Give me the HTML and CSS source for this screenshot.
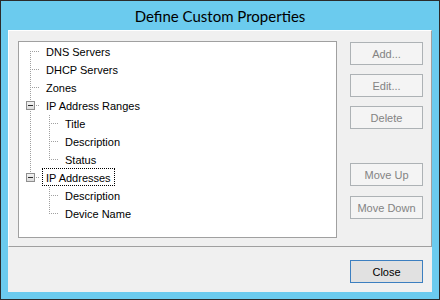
FILE: index.html
```html
<!DOCTYPE html>
<html lang="en">
<head>
    <meta charset="UTF-8">
    <meta name="viewport" content="width=device-width, initial-scale=1.0">
    <title>Define Custom Properties</title>
    <link rel="stylesheet" href="styles.css">
</head>
<body>
    <div class="window">
        <div class="titlebar">Define Custom Properties</div>
        <div class="client">
            <div class="panel">
                <div class="tree-box">
                    <ul class="tree">
                        <li><div class="node"><span class="label">DNS Servers</span></div></li>
                        <li><div class="node"><span class="label">DHCP Servers</span></div></li>
                        <li><div class="node"><span class="label">Zones</span></div></li>
                        <li>
                            <div class="node"><span class="toggle"></span><span class="label">IP Address Ranges</span></div>
                            <ul>
                                <li><div class="node"><span class="label">Title</span></div></li>
                                <li><div class="node"><span class="label">Description</span></div></li>
                                <li><div class="node"><span class="label">Status</span></div></li>
                            </ul>
                        </li>
                        <li>
                            <div class="node"><span class="toggle"></span><span class="label focus">IP Addresses</span></div>
                            <ul>
                                <li><div class="node"><span class="label">Description</span></div></li>
                                <li><div class="node"><span class="label">Device Name</span></div></li>
                            </ul>
                        </li>
                    </ul>
                </div>
                <div class="actions">
                    <button disabled>Add...</button>
                    <button disabled>Edit...</button>
                    <button disabled>Delete</button>
                    <div class="spacer"></div>
                    <button disabled>Move Up</button>
                    <button disabled class="last">Move Down</button>
                </div>
            </div>
            <div class="footer">
                <button class="default">Close</button>
            </div>
        </div>
    </div>
</body>
</html>
```

FILE: styles.css
```css
* {
    box-sizing: border-box;
}
body {
    margin: 0;
    font-family: "Liberation Sans", Arial, sans-serif;
    font-size: 11px;
    color: #000;
}
.window {
    width: 440px;
    height: 300px;
    border: 1px solid #2b2b2b;
    background: #6bcbee;
    padding: 0 7px 7px;
    display: flex;
    flex-direction: column;
}
.titlebar {
    height: 29px;
    line-height: 30px;
    text-align: center;
    font-family: Lato, "Noto Sans", sans-serif;
    font-size: 15px;
    color: #000;
}
.client {
    flex: 1;
    background: #f0f0f0;
    display: flex;
    flex-direction: column;
}
.panel {
    height: 217px;
    border: 1px solid;
    border-color: #fff #a0a0a0 #a0a0a0 #fff;
    padding: 10px 8px 8px 9px;
    display: flex;
    gap: 13px;
}
.tree-box {
    width: 319px;
    height: 197px;
    border: 1px solid #a0a0a0;
    background: #fff;
}
.tree, .tree ul {
    list-style: none;
    margin: 0;
    padding: 0;
}
.tree ul {
    padding-left: 19px;
}
.tree li {
    position: relative;
}
/* vertical dotted line */
.tree li::after {
    content: "";
    position: absolute;
    left: 11px;
    top: 0;
    bottom: 0;
    width: 1px;
    background: repeating-linear-gradient(to bottom, transparent 0 1px, #a0a0a0 1px 2px);
}
.tree > li:first-child::after {
    top: 8px;
}
.tree li:last-child::after {
    bottom: auto;
    height: 10px;
}
.node {
    position: relative;
    height: 18px;
    display: flex;
}
/* horizontal connector */
.node::before {
    content: "";
    position: absolute;
    left: 11px;
    top: 9px;
    width: 10px;
    height: 1px;
    background: repeating-linear-gradient(to right, #a0a0a0 0 1px, transparent 1px 2px);
}
.toggle {
    position: absolute;
    z-index: 1;
    left: 7px;
    top: 5px;
    width: 9px;
    height: 9px;
    border: 1px solid #8f8f8f;
    background: linear-gradient(#f2f2f2, #dcdcdc);
}
.toggle::after {
    content: "";
    position: absolute;
    left: 1px;
    top: 3px;
    width: 5px;
    height: 1px;
    background: #2a2a2a;
}
.label {
    margin-left: 23px;
    height: 18px;
    padding: 1px 3px 0;
    line-height: 16px;
    border: 1px solid transparent;
    white-space: nowrap;
}
.label.focus {
    border: 1px dotted #000;
}
.actions {
    padding-top: 1px;
    display: flex;
    flex-direction: column;
    gap: 9px;
}
.spacer {
    height: 16px;
}
.actions .last {
    margin-top: 1px;
}
button {
    width: 73px;
    height: 23px;
    padding: 1px 0 0;
    font-family: "Liberation Sans", Arial, sans-serif;
    font-size: 11px;
    color: #000;
    background: #e1e1e1;
    border: 1px solid #adadad;
    border-radius: 0;
}
button:disabled {
    color: #838383;
    background: #f4f4f4;
    border-color: #adb2b5;
}
button.default {
    border-color: #3c7fc0;
}
.footer {
    flex: 1;
    display: flex;
    justify-content: flex-end;
    align-items: flex-start;
    padding: 13px 9px 0 0;
}
```
